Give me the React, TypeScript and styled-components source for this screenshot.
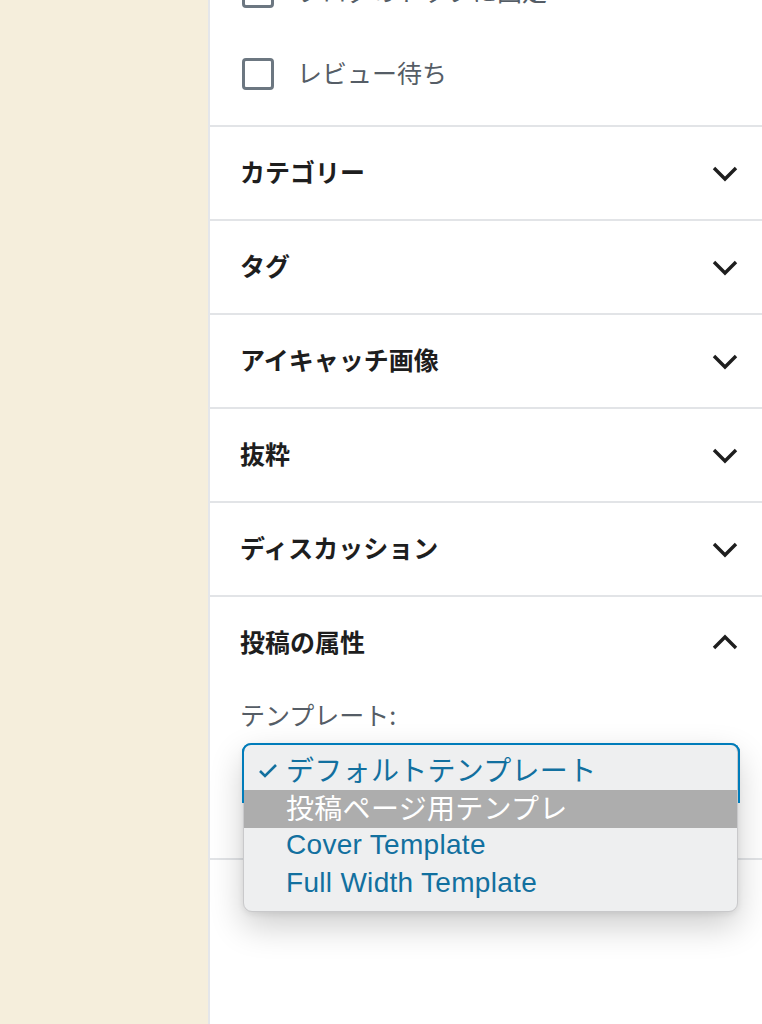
import React from 'react'
import styled, { createGlobalStyle } from 'styled-components'

const GlobalStyle = createGlobalStyle`
  html, body {
    margin: 0;
    padding: 0;
    background: #f5eedc;
  }
  body {
    font-family: "Noto Sans CJK JP", "Noto Sans", sans-serif;
    overflow: hidden;
  }
`

const Page = styled.div`
  display: flex;
  height: 1024px;
  overflow: hidden;
  background: #f5eedc;
`

const Backdrop = styled.div`
  width: 208px;
  flex-shrink: 0;
`

const Sidebar = styled.aside`
  flex: 1;
  background: #fff;
  border-left: 2px solid #e4e6ea;
  display: flex;
  flex-direction: column;
`

const StatusSection = styled.div`
  display: flex;
  flex-direction: column;
  gap: 50px;
  margin-top: -24px;
  padding: 0 22px 35px 32px;
  border-bottom: 2px solid #e2e4e7;
`

const CheckRow = styled.label`
  display: flex;
  align-items: center;
  gap: 23px;
  height: 32px;
  font-size: 25px;
  line-height: 32px;
  padding-bottom: 0;
  color: #555d66;
`

const CheckLabel = styled.span`
  margin-top: -4px;
`

const CheckBox = styled.span`
  width: 32px;
  height: 32px;
  box-sizing: border-box;
  border: 3px solid #6c7781;
  border-radius: 4px;
  flex-shrink: 0;
`

const Panel = styled.section`
  border-bottom: 2px solid #e2e4e7;
`

const PanelHeader = styled.div`
  height: 92px;
  box-sizing: border-box;
  display: flex;
  align-items: center;
  justify-content: space-between;
  padding: 0 24px 0 30px;
  font-size: 25px;
  font-weight: 700;
  color: #1e1e1e;
`

const HeaderTitle = styled.span`
  margin-top: -4px;
`

const PanelBody = styled.div`
  padding: 9px 22px 55px 30px;
`

const FieldLabel = styled.div`
  font-size: 25px;
  line-height: 32px;
  color: #555d66;
  margin-bottom: 13px;
`

const Select = styled.div`
  position: relative;
  margin-left: 2px;
  height: 60px;
  box-sizing: border-box;
  border: 2px solid #007cba;
  border-radius: 9px;
  background: #fff;
`

const Menu = styled.ul`
  position: absolute;
  top: -2px;
  left: -1px;
  right: 0;
  margin: 0;
  padding: 8px 0 7px;
  list-style: none;
  background: #eeeff0;
  border: 1px solid #c9c9cb;
  border-radius: 9px;
  box-shadow: 0 14px 34px rgba(0, 0, 0, 0.2), 0 2px 6px rgba(0, 0, 0, 0.08);
  z-index: 2;

  &::before {
    content: '';
    position: absolute;
    top: -1px;
    left: -2px;
    right: -3px;
    height: 58px;
    border: 2px solid #007cba;
    border-bottom: none;
    border-radius: 9px 9px 0 0;
    pointer-events: none;
  }
`

const MenuItem = styled.li<{ $active?: boolean }>`
  position: relative;
  height: 38px;
  box-sizing: border-box;
  display: flex;
  align-items: center;
  padding: 0 0 5px 42px;
  font-family: "Liberation Sans", "Noto Sans CJK JP", sans-serif;
  font-size: 28px;
  letter-spacing: 0.3px;
  color: ${p => (p.$active ? '#fff' : '#12709f')};
  background: ${p => (p.$active ? '#adadad' : 'transparent')};
`

const CheckMark = styled.svg`
  position: absolute;
  left: 14px;
  top: 11px;
`

const Chevron = ({ up }: { up?: boolean }) => (
  <svg width="26" height="26" viewBox="0 0 26 26" fill="none">
    <path
      d={up ? 'M2 18 L13 7 L24 18' : 'M2 8 L13 19 L24 8'}
      stroke="#1e1e1e"
      strokeWidth="3.4"
    />
  </svg>
)

const panels = ['カテゴリー', 'タグ', 'アイキャッチ画像', '抜粋', 'ディスカッション']

const templates = [
  { name: 'デフォルトテンプレート', checked: true },
  { name: '投稿ページ用テンプレ', active: true },
  { name: 'Cover Template' },
  { name: 'Full Width Template' },
]

export default function App() {
  return (
    <Page>
      <GlobalStyle />
      <Backdrop />
      <Sidebar>
        <StatusSection>
          <CheckRow>
            <CheckBox />
            <CheckLabel>ブログのトップに固定</CheckLabel>
          </CheckRow>
          <CheckRow>
            <CheckBox />
            <CheckLabel>レビュー待ち</CheckLabel>
          </CheckRow>
        </StatusSection>

        {panels.map(title => (
          <Panel key={title}>
            <PanelHeader>
              <HeaderTitle>{title}</HeaderTitle>
              <Chevron />
            </PanelHeader>
          </Panel>
        ))}

        <Panel>
          <PanelHeader>
            <HeaderTitle>投稿の属性</HeaderTitle>
            <Chevron up />
          </PanelHeader>
          <PanelBody>
            <FieldLabel>テンプレート:</FieldLabel>
            <Select>
              <Menu>
                {templates.map(t => (
                  <MenuItem key={t.name} $active={t.active}>
                    {t.checked && (
                      <CheckMark width="20" height="16" viewBox="0 0 20 16" fill="none">
                        <path d="M2 8 L7 13 L18 2" stroke="#12709f" strokeWidth="2.6" />
                      </CheckMark>
                    )}
                    {t.name}
                  </MenuItem>
                ))}
              </Menu>
            </Select>
          </PanelBody>
        </Panel>
      </Sidebar>
    </Page>
  )
}
